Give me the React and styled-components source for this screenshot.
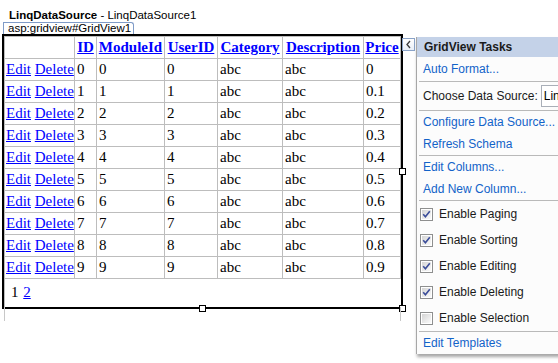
import React from "react";
import styled, { createGlobalStyle } from "styled-components";

const GlobalStyle = createGlobalStyle`
  html, body { margin: 0; padding: 0; background: #fff; overflow: hidden; }
  body { width: 558px; height: 363px; }
`;

const Canvas = styled.div`
  position: relative;
  width: 558px;
  height: 363px;
  background: #fff;
  overflow: hidden;
`;

const SourceLabel = styled.div`
  height: 22px;
  box-sizing: border-box;
  padding: 9px 0 0 9px;
  font: 11.5px/13px "Liberation Sans", Arial, sans-serif;
  color: #000;
  white-space: nowrap;
  b { font-weight: bold; }
`;

const TagRow = styled.div`
  height: 12px;
`;

const ControlTag = styled.div`
  display: inline-block;
  margin-left: 3px;
  height: 12px;
  box-sizing: border-box;
  padding: 0 2px 0 4px;
  border: 1px solid #7f9bc7;
  border-bottom: none;
  border-radius: 0 3px 0 0;
  background: #fff;
  font: 11.5px/11px "Liberation Sans", Arial, sans-serif;
  color: #000;
  vertical-align: top;
`;

const Frame = styled.div`
  position: relative;
  margin-left: 2px;
  width: fit-content;
  border: 2px solid #000;
  background: #fff;
  &::before, &::after {
    content: "";
    position: absolute;
    top: 100%;
    width: 1px;
    height: 14px;
    background: #c8c8c8;
  }
  &::before { left: 0; }
  &::after { right: 0; }
`;

const Handle = styled.span`
  position: absolute;
  width: 5px;
  height: 5px;
  border: 1px solid #000;
  background: #fff;
  ${(p) => p.$pos === "bc" && "left: calc(50% - 4px); bottom: -5px;"}
  ${(p) => p.$pos === "br" && "right: -5px; bottom: -5px;"}
  ${(p) => p.$pos === "rm" && "right: -5px; top: calc(50% - 4px);"}
`;

const Grid = styled.table`
  border-collapse: collapse;
  table-layout: fixed;
  width: 396px;
  font: 15px/19px "Liberation Serif", "Times New Roman", serif;
  color: #000;
  td, th {
    border: 1px solid #bdbdbd;
    padding: 1px 1px 1px 2px;
    white-space: nowrap;
  }
  td:first-child { padding-left: 1px; padding-right: 0; }
  th { font-weight: bold; text-align: center; padding: 1px; }
  td { text-align: left; }
`;

const PagerCell = styled.td`
  &&& {
    padding: 4px 5px 5px 6px;
    border-right: none;
    border-bottom: none;
    word-spacing: 1px;
  }
`;

const Link = styled.a`
  color: #0000ff;
  text-decoration: underline;
  cursor: pointer;
`;

const Arrow = styled.div`
  position: absolute;
  left: 402px;
  top: 38px;
  width: 11px;
  height: 11px;
  border: 1px solid #8aa3c8;
  background: linear-gradient(#ffffff, #e8eef7);
  display: flex;
  align-items: center;
  justify-content: center;
`;

const Panel = styled.div`
  position: absolute;
  left: 416px;
  top: 37px;
  width: 170px;
  border-left: 1px solid #a7a7a7;
  background: #fcfcfc;
  box-shadow: 1px 3px 3px rgba(0, 0, 0, 0.35);
  font: 12px/14px "Liberation Sans", Arial, sans-serif;
  display: flex;
  flex-direction: column;
`;

const PanelHeader = styled.div`
  height: 20px;
  display: flex;
  align-items: center;
  padding-left: 7px;
  background: #c4d2e8;
  font-weight: bold;
  color: #1a1a1a;
`;

const Section = styled.div`
  display: flex;
  flex-direction: column;
  padding: ${(p) => p.$pad || "0"};
`;

const Separator = styled.div`
  height: 1px;
  margin-left: 2px;
  background: #b9b9b9;
`;

const TaskLink = styled.div`
  height: 22px;
  display: flex;
  align-items: center;
  padding-left: 6px;
  color: #1263c9;
  white-space: nowrap;
`;

const ChooseRow = styled.div`
  height: 28px;
  display: flex;
  align-items: center;
  padding-left: 6px;
  color: #1a1a1a;
  white-space: nowrap;
`;

const Dropdown = styled.div`
  margin-left: 3px;
  height: 20px;
  width: 120px;
  border: 1px solid #a9afb8;
  background: #fff;
  display: flex;
  align-items: center;
  padding-left: 2px;
  color: #000;
`;

const CheckRow = styled.div`
  height: 26px;
  display: flex;
  align-items: center;
  gap: 6px;
  padding-left: 3px;
  color: #1a1a1a;
  white-space: nowrap;
`;

const CheckBox = ({ checked }) => (
  <svg width="13" height="13" viewBox="0 0 13 13">
    <defs>
      <linearGradient id={checked ? "cbg1" : "cbg0"} x1="0" y1="0" x2="1" y2="1">
        <stop offset="0" stopColor="#d4d4d4" />
        <stop offset="1" stopColor="#fbfbfb" />
      </linearGradient>
    </defs>
    <rect x="0.5" y="0.5" width="12" height="12" fill="#fff" stroke="#8e8f8f" />
    <rect x="2" y="2" width="9" height="9" fill={`url(#${checked ? "cbg1" : "cbg0"})`} />
    {checked && (
      <path d="M3.2 6.3 L5.4 8.8 L9.8 3.2" fill="none" stroke="#3b4d99" strokeWidth="1.6" />
    )}
  </svg>
);

const rows = Array.from({ length: 10 }, (_, i) => i);
const headers = ["ID", "ModuleId", "UserID", "Category", "Description", "Price"];
const widths = [70, 22, 68, 53, 65, 81, 37];

export default function App() {
  return (
    <Canvas>
      <GlobalStyle />
      <SourceLabel>
        <b>LinqDataSource</b> - LinqDataSource1
      </SourceLabel>
      <TagRow>
        <ControlTag>asp:gridview#GridView1</ControlTag>
      </TagRow>
      <Frame>
        <Grid>
          <colgroup>
            {widths.map((w, i) => (
              <col key={i} style={{ width: w }} />
            ))}
          </colgroup>
          <thead>
            <tr>
              <th>&nbsp;</th>
              {headers.map((h) => (
                <th key={h}>
                  <Link>{h}</Link>
                </th>
              ))}
            </tr>
          </thead>
          <tbody>
            {rows.map((i) => (
              <tr key={i}>
                <td>
                  <Link>Edit</Link> <Link>Delete</Link>
                </td>
                <td>{i}</td>
                <td>{i}</td>
                <td>{i}</td>
                <td>abc</td>
                <td>abc</td>
                <td>{i === 0 ? "0" : `0.${i}`}</td>
              </tr>
            ))}
            <tr>
              <PagerCell colSpan={7}>
                1 <Link>2</Link>
              </PagerCell>
            </tr>
          </tbody>
        </Grid>
        <Handle $pos="bc" />
        <Handle $pos="br" />
        <Handle $pos="rm" />
      </Frame>
      <Arrow>
        <svg width="7" height="9" viewBox="0 0 7 9">
          <path d="M5 1 L2 4.5 L5 8" fill="none" stroke="#3c3c3c" strokeWidth="1.3" />
        </svg>
      </Arrow>
      <Panel>
        <PanelHeader>GridView Tasks</PanelHeader>
        <Section $pad="1px 0">
          <TaskLink>Auto Format...</TaskLink>
        </Section>
        <Separator />
        <Section>
          <ChooseRow>
            Choose Data Source:
            <Dropdown>LinqDataSource1</Dropdown>
          </ChooseRow>
        </Section>
        <Separator />
        <Section>
          <TaskLink>Configure Data Source...</TaskLink>
          <TaskLink>Refresh Schema</TaskLink>
        </Section>
        <Separator />
        <Section>
          <TaskLink>Edit Columns...</TaskLink>
          <TaskLink>Add New Column...</TaskLink>
        </Section>
        <Separator />
        <Section>
          <CheckRow><CheckBox checked />Enable Paging</CheckRow>
          <CheckRow><CheckBox checked />Enable Sorting</CheckRow>
          <CheckRow><CheckBox checked />Enable Editing</CheckRow>
          <CheckRow><CheckBox checked />Enable Deleting</CheckRow>
          <CheckRow><CheckBox />Enable Selection</CheckRow>
        </Section>
        <Separator />
        <Section>
          <TaskLink>Edit Templates</TaskLink>
        </Section>
      </Panel>
    </Canvas>
  );
}
